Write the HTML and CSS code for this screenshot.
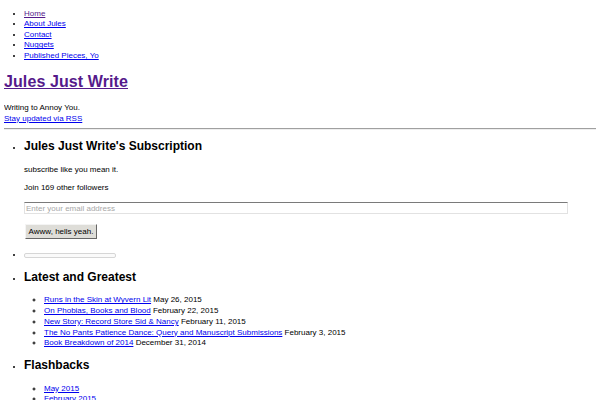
FILE: index.html
```html
<!DOCTYPE html>
<html>
<head>
<meta charset="utf-8">
<title>Jules Just Write</title>
<link rel="stylesheet" href="styles.css">
</head>
<body>
<ul class="nav">
  <li><a class="visited" href="#">Home</a></li>
  <li><a href="#">About Jules</a></li>
  <li><a href="#">Contact</a></li>
  <li><a href="#">Nuggets</a></li>
  <li><a href="#">Published Pieces, Yo</a></li>
</ul>
<h1 class="site-title"><a class="visited" href="#">Jules Just Write</a></h1>
<p class="desc">Writing to Annoy You.<br><a href="#">Stay updated via RSS</a></p>
<hr class="rule">
<ul class="widgets">
  <li class="widget">
    <h2 class="widget-title">Jules Just Write's Subscription</h2>
    <p class="para">subscribe like you mean it.</p>
    <p class="para">Join 169 other followers</p>
    <div class="field-row"><input class="email" type="text" placeholder="Enter your email address"></div>
    <div class="button-row"><button class="btn" type="button">Awww, hells yeah.</button></div>
  </li>
  <li class="widget blank-item"><span class="blank"></span></li>
  <li class="widget">
    <h2 class="widget-title">Latest and Greatest</h2>
    <ul class="sub">
      <li><a href="#">Runs in the Skin at Wyvern Lit</a> May 26, 2015</li>
      <li><a href="#">On Phobias, Books and Blood</a> February 22, 2015</li>
      <li><a href="#">New Story: Record Store Sid &amp; Nancy</a> February 11, 2015</li>
      <li><a href="#">The No Pants Patience Dance: Query and Manuscript Submissions</a> February 3, 2015</li>
      <li><a href="#">Book Breakdown of 2014</a> December 31, 2014</li>
    </ul>
  </li>
  <li class="widget">
    <h2 class="widget-title">Flashbacks</h2>
    <ul class="sub">
      <li><a href="#">May 2015</a></li>
      <li><a href="#">February 2015</a></li>
      <li><a href="#">January 2015</a></li>
      <li><a href="#">December 2014</a></li>
    </ul>
  </li>
</ul>
</body>
</html>
```

FILE: styles.css
```css
html, body {
  background: #fff;
}
body {
  margin: 4px;
  font-family: "Liberation Sans", Arial, sans-serif;
  font-size: 8px;
  line-height: 1.3;
  color: #000;
}
a {
  color: #0000ee;
}
a.visited {
  color: #551a8b;
}
ul {
  margin: 8px 0;
  padding-left: 20px;
}
.nav {
  margin-top: 5px;
}
.site-title {
  font-size: 16px;
  margin: 10.7px 0;
  letter-spacing: 0.1px;
}
.desc {
  margin: 8px 0 4px;
}
.rule {
  margin: 4px 0;
  border: 0;
  border-top: 1px solid #a0a0a0;
  border-bottom: 1px solid #eee;
}
.widget-title {
  font-size: 12px;
  margin: 9px 0 10px;
}
.para {
  margin: 8px 0;
}
.field-row {
  margin-top: 9px;
}
.email {
  display: block;
  box-sizing: border-box;
  width: 544px;
  height: 12px;
  margin: 0;
  padding: 0 1px;
  font-family: "Liberation Sans", Arial, sans-serif;
  font-size: 8px;
  border: 1px solid #e2e2e2;
  border-top-color: #7a7a7a;
  background: #fff;
  outline: none;
}
.email::placeholder {
  color: #a8a8a8;
}
.button-row {
  margin-top: 10px;
  padding-left: 1px;
}
.btn {
  display: block;
  box-sizing: border-box;
  height: 15px;
  width: 72px;
  margin: 0;
  padding: 0;
  font-family: "Liberation Sans", Arial, sans-serif;
  font-size: 8px;
  color: #000;
  background: #deddd8;
  border: 1px solid #f4f4f4;
  border-right-color: #666;
  border-bottom-color: #666;
}
.blank-item {
  margin-top: 11px;
}
.blank {
  display: inline-block;
  vertical-align: middle;
  width: 90px;
  height: 3px;
  border: 1px solid #d6d6d6;
  border-radius: 2px;
  background: #fafafa;
}
.sub {
  list-style-type: circle;
  margin: 8px 0;
}
.sub li {
  line-height: 10.75px;
}
```
